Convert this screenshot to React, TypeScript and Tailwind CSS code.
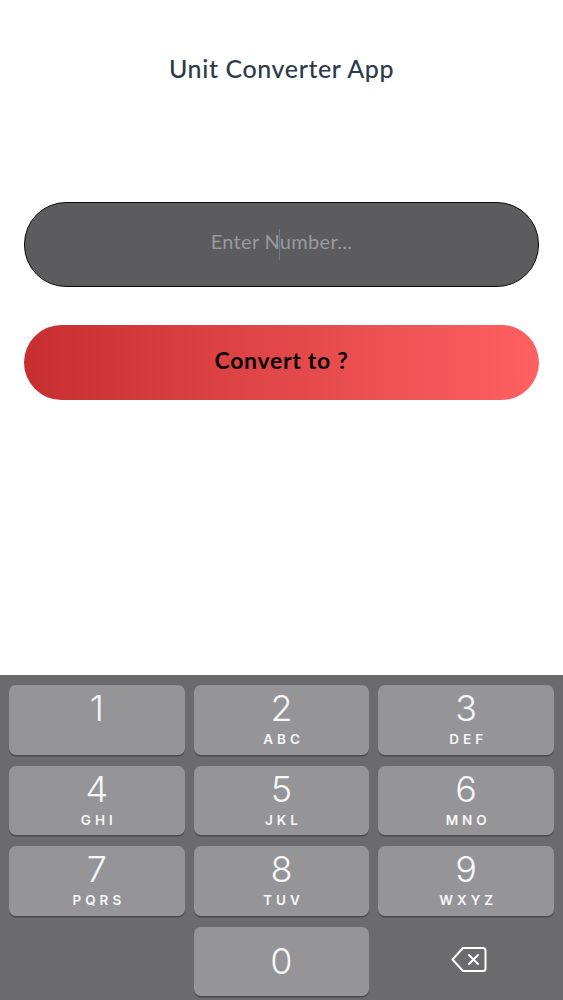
const keys = [
  { num: "1", sub: "" },
  { num: "2", sub: "ABC" },
  { num: "3", sub: "DEF" },
  { num: "4", sub: "GHI" },
  { num: "5", sub: "JKL" },
  { num: "6", sub: "MNO" },
  { num: "7", sub: "PQRS" },
  { num: "8", sub: "TUV" },
  { num: "9", sub: "WXYZ" },
];

function Key({ num, sub, center }: { num: string; sub: string; center?: boolean }) {
  return (
    <button className={`h-[69.5px] rounded-[7px] bg-[#959497] shadow-[0_1.5px_0_#4a494c] flex flex-col items-center text-[#f7f7f8] font-['Inter',sans-serif] ${center ? "justify-center" : ""}`}>
      <span className={`text-[36px] leading-[30px] font-light ${center ? "" : "mt-[8px]"}`}>{num}</span>
      {sub && <span className="text-[13.5px] leading-[14px] mt-[9px] font-semibold tracking-[4px] ml-[4px]">{sub}</span>}
    </button>
  );
}

export default function App() {
  return (
    <div className="w-[563px] h-[1000px] bg-white flex flex-col overflow-hidden font-['Lato',sans-serif]">
      <div className="flex-1 px-6">
        <h1 className="pt-[52px] text-center text-[25px] leading-[32px] font-medium text-[#2c3a4a] tracking-[0.6px]">
          Unit Converter App
        </h1>

        <div className="relative mt-[118px] h-[85px] w-[515px] rounded-[42px] border-[1.5px] border-[#0c0c0e] bg-[#5c5b5e] flex items-center justify-center">
          <span className="mb-[7px] text-[20px] text-[#9a9a9e] tracking-[0.3px]">Enter Number...</span>
          <span className="absolute left-[254px] top-[26px] h-[31px] w-px bg-[#5f7f9c]" />
        </div>

        <button className="mt-[38px] h-[75px] w-[515px] rounded-[38px] bg-gradient-to-r from-[#c62e2f] to-[#ff6062] pb-[5px] text-[23px] font-bold text-[#0c0406] tracking-[0.7px]">
          Convert to ?
        </button>
      </div>

      <div className="h-[325px] bg-[#6b6a6d] pt-[10px] px-[9px]">
        <div className="grid grid-cols-3 gap-x-[9px] gap-y-[11px]">
          {keys.map((k) => (
            <Key key={k.num} num={k.num} sub={k.sub} />
          ))}
          <div />
          <Key num="0" sub="" center />
          <div className="flex items-center justify-center pl-[6px] pb-[3px]">
            <svg width="36" height="27" viewBox="0 0 36 27" fill="none" stroke="white" strokeWidth="2" strokeLinejoin="round" strokeLinecap="round">
              <path d="M12 2h20a2.5 2.5 0 0 1 2.5 2.5v18a2.5 2.5 0 0 1-2.5 2.5H12L1.5 13.5Z" />
              <path d="M18 9l9 9M27 9l-9 9" />
            </svg>
          </div>
        </div>
      </div>
    </div>
  );
}
